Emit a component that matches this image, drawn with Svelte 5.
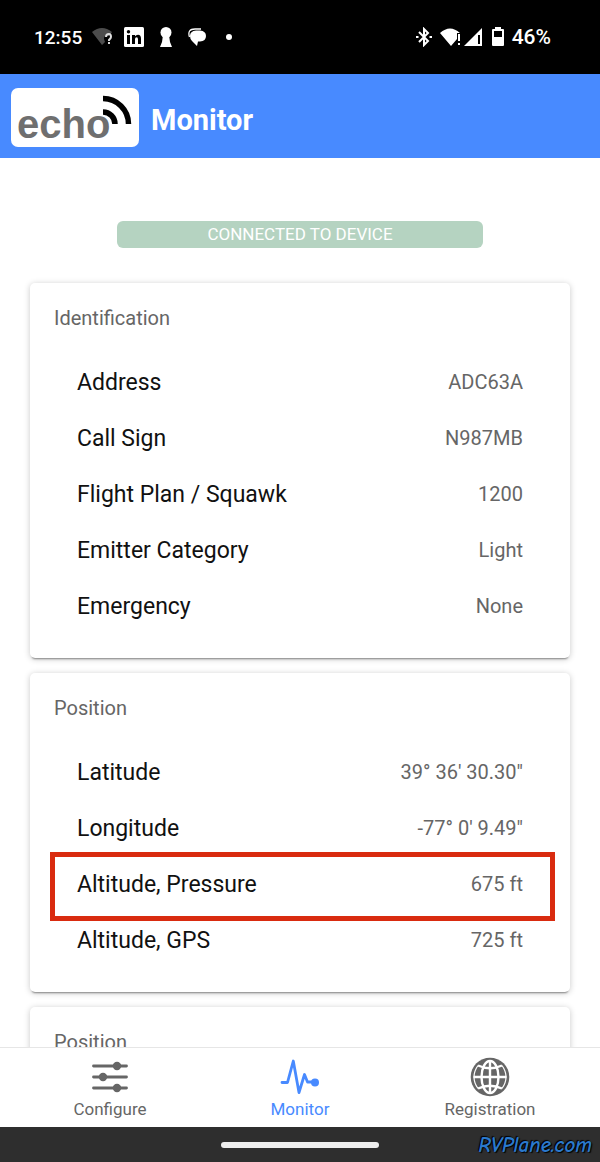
<script lang="ts">
  interface Row {
    label: string;
    value: string;
    marked?: boolean;
  }

  interface Section {
    title: string;
    rows: Row[];
  }

  const sections: Section[] = [
    {
      title: 'Identification',
      rows: [
        { label: 'Address', value: 'ADC63A' },
        { label: 'Call Sign', value: 'N987MB' },
        { label: 'Flight Plan / Squawk', value: '1200' },
        { label: 'Emitter Category', value: 'Light' },
        { label: 'Emergency', value: 'None' },
      ],
    },
    {
      title: 'Position',
      rows: [
        { label: 'Latitude', value: '39° 36\' 30.30"' },
        { label: 'Longitude', value: '-77° 0\' 9.49"' },
        { label: 'Altitude, Pressure', value: '675 ft', marked: true },
        { label: 'Altitude, GPS', value: '725 ft' },
      ],
    },
    { title: 'Position', rows: [] },
  ];

  const tabs = ['Configure', 'Monitor', 'Registration'];
  let active = $state('Monitor');
</script>

<div class="screen">
  <div class="status">
    <div class="status-group">
      <span>12:55</span>
      <svg width="22" height="20" viewBox="0 0 22 20">
        <path d="M0 5Q10 -3 20 5L17 9Q12 7 12 12L13 15L10 18Z" fill="#4c4c4c" />
        <path d="M14 10Q14 7 17 7Q19 7 19 10Q19 11 17 13V14" fill="none" stroke="#ddd" stroke-width="2" />
        <rect x="16" y="15" width="2" height="2" fill="#ddd" />
      </svg>
      <svg width="20" height="20" viewBox="0 0 20 20">
        <rect width="20" height="20" rx="1.5" fill="#fff" />
        <rect x="3" y="8" width="3" height="9" />
        <circle cx="4.5" cy="4.7" r="1.7" />
        <path d="M8 8H11V9.3Q12 7.7 14 7.7Q17 7.7 17 11.7V17H14V12.3Q14 10.3 12.6 10.3Q11 10.3 11 12.3V17H8Z" />
      </svg>
      <svg class="keyhole" width="12" height="20" viewBox="0 0 12 20" fill="#fff">
        <circle cx="6" cy="5.5" r="5.5" />
        <path d="M3 8H9L10 15L12 20H0L2 15Z" />
      </svg>
      <svg width="18" height="18" viewBox="0 0 18 18">
        <path d="M1.500 9Q-1 1 7 1H13" fill="none" stroke="#fff" stroke-width="1.300" />
        <path d="M8 2.500H12Q18 3 18 8Q18 13 12 13.500H10L9 18L4 13Q2 11 2 8Q2 3 8 2.500Z" fill="#fff" />
      </svg>
      <i class="dot"></i>
    </div>
    <div class="status-group right">
      <svg width="16" height="20" viewBox="0 0 16 20" fill="none" stroke="#fff" stroke-width="2">
        <path d="M3 5L12 14L8 18V2L12 6L3 15" />
        <path d="M0 10H2.5M13.5 10H16" />
      </svg>
      <svg width="22" height="20" viewBox="0 0 22 20" fill="#fff">
        <path d="M0 6Q10 -3 20 6H17V12L11 19Z" />
        <path d="M18 7H20V14H18ZM18 16H20V18H18Z" />
      </svg>
      <svg class="signal" width="18" height="18" viewBox="0 0 18 18">
        <path d="M0 18L18 0V18Z" fill="#fff" />
        <path d="M14 7H16V16H14Z" />
      </svg>
      <svg class="battery" width="12" height="20" viewBox="0 0 12 20">
        <path d="M3 2V0H9V2H11Q12 2 12 3V18Q12 19 11 19H1Q0 19 0 18V3Q0 2 1 2Z" fill="#fff" />
        <rect x="2" y="4" width="8" height="6" />
      </svg>
      <span class="percent">46%</span>
    </div>
  </div>

  <header>
    <svg class="logo" width="128" height="59" viewBox="0 0 128 59" role="img" aria-label="echo">
      <rect width="128" height="59" rx="7" fill="#fff" />
      <text x="6" y="50" font-family="Liberation Sans, Arial, sans-serif" font-size="40" font-weight="700" fill="#6f6f6f">echo</text>
      <g fill="none" stroke="#000" stroke-width="5.5">
        <path d="M92 10.5A25.500 25.500 0 0 1 117.500 36" />
        <path d="M92 24A12 12 0 0 1 104 36" />
      </g>
    </svg>
    <h1>Monitor</h1>
  </header>

  <main>
    <p class="banner">CONNECTED TO DEVICE</p>
    {#each sections as section}
      <section class="card">
        <h2>{section.title}</h2>
        <dl>
          {#each section.rows as row}
            <div class="row" class:marked={row.marked}>
              <dt>{row.label}</dt>
              <dd>{row.value}</dd>
            </div>
          {/each}
        </dl>
      </section>
    {/each}
  </main>

  <nav>
    {#each tabs as tab}
      <button type="button" class:active={active === tab} onclick={() => (active = tab)}>
        {#if tab === 'Configure'}
          <svg width="40" height="40" viewBox="0 0 40 40" fill="currentColor">
            <path d="M3.500 9H36.500M3.500 20H36.500M3.500 31H36.500" stroke="currentColor" stroke-width="2.800" stroke-linecap="round" />
            <circle cx="27" cy="9" r="4.200" />
            <circle cx="13" cy="20" r="4.200" />
            <circle cx="27" cy="31" r="4.200" />
          </svg>
        {:else if tab === 'Monitor'}
          <svg width="40" height="40" viewBox="0 0 40 40">
            <path d="M2 25.500H7.500L13.300 4L19 35.500L24.500 17.500L27.500 25H34" fill="none" stroke="currentColor" stroke-width="2.800" stroke-linecap="round" stroke-linejoin="round" />
            <circle cx="35" cy="25.500" r="4" fill="currentColor" />
          </svg>
        {:else}
          <svg width="40" height="40" viewBox="0 0 40 40">
            <circle cx="20" cy="20" r="19.300" fill="currentColor" />
            <g fill="none" stroke="#fff" stroke-width="2.400">
              <path d="M3.500 20H36.500M20 3.500V36.500" />
              <ellipse cx="20" cy="20" rx="8.500" ry="16" />
              <path d="M8 8.500Q20 14 32 8.500M8 31.500Q20 26 32 31.500" />
              <path d="M8 8.500Q4 14 4 20Q4 26 8 31.500M32 8.500Q36 14 36 20Q36 26 32 31.500" stroke-width="1.200" />
            </g>
          </svg>
        {/if}
        <span>{tab}</span>
      </button>
    {/each}
  </nav>

  <footer>
    <i class="handle"></i>
    <span class="credit">RVPlane.com</span>
  </footer>
</div>

<style>
  :global(body) {
    background: #fff;
  }

  .screen {
    display: flex;
    flex-direction: column;
    height: 100vh;
    font-family: Roboto, sans-serif;
    color: #666;
  }

  svg {
    display: block;
    flex: none;
  }

  .status {
    display: flex;
    align-items: center;
    justify-content: space-between;
    height: 74px;
    padding: 0 49px 0 34px;
    box-sizing: border-box;
    background: #000;
    color: #fff;
    font-size: 19px;
    font-weight: 500;
  }

  .status-group {
    display: flex;
    align-items: center;
    gap: 10px;
  }

  .keyhole {
    margin: 0 6px;
  }

  .dot {
    width: 6px;
    height: 6px;
    margin-left: 10px;
    border-radius: 50%;
    background: #fff;
  }

  .right {
    gap: 8px;
  }

  .signal {
    margin-left: -6px;
  }

  .battery {
    margin-left: 2px;
  }

  .percent {
    font-size: 21px;
  }

  header {
    display: flex;
    align-items: center;
    gap: 12px;
    height: 84px;
    padding: 2px 11px 0;
    box-sizing: border-box;
    background: #488aff;
    color: #fff;
  }

  h1 {
    margin: 6px 0 0;
    font-size: 29px;
    font-weight: 700;
    line-height: 32px;
  }

  main {
    flex: 1;
    min-height: 0;
    overflow: hidden;
    padding: 63px 5% 0;
  }

  .banner {
    width: 366px;
    max-width: 100%;
    margin: 0 auto 35px;
    border-radius: 6px;
    background: #b5d3c1;
    color: #fff;
    font-size: 17px;
    line-height: 27px;
    text-align: center;
  }

  .card {
    margin-bottom: 15px;
    padding-bottom: 24px;
    border-radius: 5px;
    box-shadow: 0 3px 2px -2px rgba(0, 0, 0, 0.4), 0 1px 6px rgba(0, 0, 0, 0.22);
  }

  h2 {
    margin: 0;
    padding: 21px 24px 22px;
    font-size: 20px;
    font-weight: 400;
    line-height: 28px;
  }

  dl,
  dd {
    margin: 0;
  }

  .row {
    position: relative;
    display: flex;
    align-items: center;
    justify-content: space-between;
    height: 56px;
    padding: 0 47px;
  }

  dt {
    color: #111;
    font-size: 23px;
  }

  dd {
    font-size: 20px;
  }

  .marked::after {
    content: '';
    position: absolute;
    inset: -4px 15px -9px 20px;
    border: 5px solid #d92b0f;
  }

  nav {
    display: flex;
    height: 80px;
    padding: 0 15px;
    box-sizing: border-box;
    border-top: 1px solid #e6e6e6;
    background: #fff;
  }

  button {
    flex: 1;
    display: flex;
    flex-direction: column;
    align-items: center;
    gap: 1px;
    padding: 9px 0 0;
    border: 0;
    background: none;
    color: #666;
    font: 17px/22px Roboto, sans-serif;
    cursor: pointer;
  }

  .active {
    color: #488aff;
  }

  footer {
    position: relative;
    display: flex;
    align-items: center;
    justify-content: center;
    height: 35px;
    background: #2e2e2e;
  }

  .handle {
    width: 158px;
    height: 6px;
    border-radius: 3px;
    background: #eee;
  }

  .credit {
    position: absolute;
    right: 8px;
    color: #2b79cc;
    font-family: "Comic Neue", "Segoe Print", Lato, cursive;
    font-size: 21px;
    font-style: italic;
    font-weight: 700;
    text-shadow: 1px 1px 1px #000, -1px -1px 1px #000;
  }
</style>
